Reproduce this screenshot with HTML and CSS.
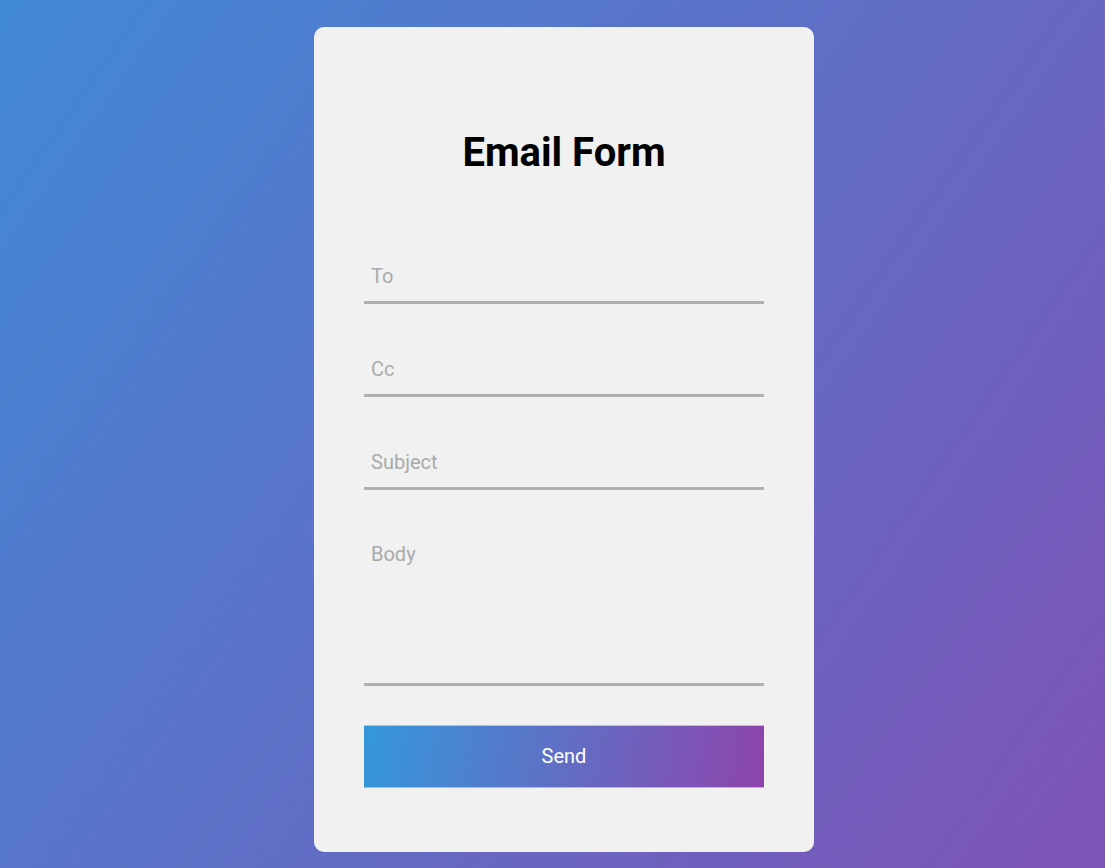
FILE: index.html
```html
<!DOCTYPE html>
<html lang="en">
<head>
<meta charset="utf-8">
<title>Email Form</title>
<link rel="stylesheet" href="styles.css">
</head>
<body>
<div class="page">
  <form class="card">
    <h1 class="title">Email Form</h1>
    <input class="field" type="text" placeholder="To">
    <input class="field" type="text" placeholder="Cc">
    <input class="field" type="text" placeholder="Subject">
    <textarea class="field body-field" placeholder="Body"></textarea>
    <button class="send" type="button">Send</button>
  </form>
</div>
</body>
</html>
```

FILE: styles.css
```css
html, body {
  margin: 0;
  padding: 0;
}
body {
  min-height: 100vh;
  background: linear-gradient(125deg, #4189d5 0%, #7e53b6 100%);
  font-family: Roboto, "Liberation Sans", Arial, sans-serif;
}
.page {
  padding: 27px 0 16px 314px;
}
.card {
  box-sizing: border-box;
  width: 500px;
  background: #f1f1f2;
  border-radius: 10px;
  padding: 102px 50px 64px;
  display: flex;
  flex-direction: column;
}
.title {
  margin: 0 0 74px;
  font-size: 40px;
  line-height: 47px;
  font-weight: 700;
  color: #000;
  text-align: center;
}
.field {
  box-sizing: border-box;
  display: block;
  width: 100%;
  height: 54px;
  margin: 0 0 39px;
  padding: 14px 7px;
  border: none;
  border-bottom: 3px solid #b0b0b0;
  background: transparent;
  font-family: Roboto, "Liberation Sans", Arial, sans-serif;
  font-size: 20px;
  line-height: 23px;
  color: #333;
  outline: none;
}
.field::placeholder {
  color: #aaaaaa;
  opacity: 1;
}
.body-field {
  height: 157px;
  padding-top: 14px;
  resize: none;
}
.send {
  box-sizing: border-box;
  width: 100%;
  height: 63px;
  padding: 0;
  border: none;
  border-top: 1px solid #a9c3ea;
  border-bottom: 1px solid #c0b0df;
  background: linear-gradient(100deg, #3498db 0%, #8e44ad 100%);
  color: #fff;
  font-family: Roboto, "Liberation Sans", Arial, sans-serif;
  font-size: 20px;
  line-height: 23px;
  cursor: pointer;
}
```
